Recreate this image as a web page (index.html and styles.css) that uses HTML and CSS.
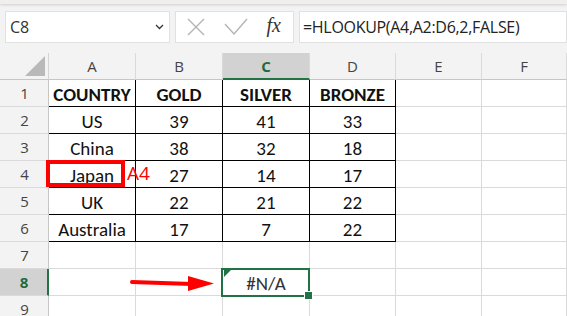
FILE: index.html
```html
<!DOCTYPE html>
<html lang="en">
<head>
    <meta charset="UTF-8">
    <title>Book1 - Excel</title>
    <link rel="stylesheet" href="styles.css">
</head>
<body>
    <div class="ribbon-edge"></div>

    <!-- name box + formula bar -->
    <div class="formula-row">
        <div class="name-box">
            <span>C8</span>
            <svg class="chevron" width="9" height="6" viewBox="0 0 9 6"><path d="M1 1 L4.5 4.5 L8 1" fill="none" stroke="#333" stroke-width="1.3"/></svg>
        </div>
        <div class="fx-buttons">
            <svg width="18" height="18" viewBox="0 0 18 18"><path d="M1 1 L17 17 M17 1 L1 17" stroke="#b4b4b4" stroke-width="1.4" fill="none"/></svg>
            <svg width="24" height="18" viewBox="0 0 24 18"><path d="M1 6 L10 16 L23 1" stroke="#b4b4b4" stroke-width="1.4" fill="none"/></svg>
            <span class="fx">fx</span>
        </div>
        <div class="formula-box">=HLOOKUP(A4,A2:D6,2,FALSE)</div>
    </div>

    <!-- worksheet grid -->
    <div class="sheet">
        <div class="corner">
            <svg width="20" height="20" viewBox="0 0 20 20"><polygon points="20,0 20,20 0,20" fill="#b9b9b9"/></svg>
        </div>
        <div class="col-head">A</div>
        <div class="col-head">B</div>
        <div class="col-head sel">C</div>
        <div class="col-head">D</div>
        <div class="col-head">E</div>
        <div class="col-head">F</div>

        <div class="row-head">1</div>
        <div class="cell bd hd">COUNTRY</div>
        <div class="cell bd hd">GOLD</div>
        <div class="cell bd hd">SILVER</div>
        <div class="cell bd hd">BRONZE</div>
        <div class="cell"></div>
        <div class="cell"></div>

        <div class="row-head">2</div>
        <div class="cell bd">US</div>
        <div class="cell bd">39</div>
        <div class="cell bd">41</div>
        <div class="cell bd">33</div>
        <div class="cell"></div>
        <div class="cell"></div>

        <div class="row-head">3</div>
        <div class="cell bd">China</div>
        <div class="cell bd">38</div>
        <div class="cell bd">32</div>
        <div class="cell bd">18</div>
        <div class="cell"></div>
        <div class="cell"></div>

        <div class="row-head">4</div>
        <div class="cell bd">Japan</div>
        <div class="cell bd">27</div>
        <div class="cell bd">14</div>
        <div class="cell bd">17</div>
        <div class="cell"></div>
        <div class="cell"></div>

        <div class="row-head">5</div>
        <div class="cell bd">UK</div>
        <div class="cell bd">22</div>
        <div class="cell bd">21</div>
        <div class="cell bd">22</div>
        <div class="cell"></div>
        <div class="cell"></div>

        <div class="row-head">6</div>
        <div class="cell bd">Australia</div>
        <div class="cell bd">17</div>
        <div class="cell bd">7</div>
        <div class="cell bd">22</div>
        <div class="cell"></div>
        <div class="cell"></div>

        <div class="row-head">7</div>
        <div class="cell"></div>
        <div class="cell"></div>
        <div class="cell"></div>
        <div class="cell"></div>
        <div class="cell"></div>
        <div class="cell"></div>

        <div class="row-head sel">8</div>
        <div class="cell"></div>
        <div class="cell"></div>
        <div class="cell active"><span class="err-flag"></span>#N/A<span class="fill-handle"></span></div>
        <div class="cell"></div>
        <div class="cell"></div>
        <div class="cell"></div>

        <div class="row-head">9</div>
        <div class="cell"></div>
        <div class="cell"></div>
        <div class="cell"></div>
        <div class="cell"></div>
        <div class="cell"></div>
        <div class="cell"></div>

        <!-- annotations drawn over the sheet -->
        <div class="mark-box"></div>
        <div class="mark-label">A4</div>
        <svg class="mark-arrow" width="90" height="20" viewBox="0 0 90 20">
            <path d="M2 6 L62 8" stroke="#f00" stroke-width="4" stroke-linecap="round" fill="none"/>
            <polygon points="58,0 84,7.5 58,15" fill="#f00"/>
        </svg>
    </div>
</body>
</html>
```

FILE: styles.css
```css
/* Base */
body {
    margin: 0;
    background-color: #f3f3f3;
    font-family: "Open Sans", "Noto Sans", sans-serif;
    color: #222;
    overflow: hidden;
}

.ribbon-edge {
    height: 4px;
    background-color: #f0efee;
    box-shadow: 0 1px 3px rgba(0, 0, 0, 0.15);
}

/* Formula bar */
.formula-row {
    display: flex;
    gap: 5px;
    padding: 7px 0 10px 5px;
    height: 32px;
}

.name-box, .fx-buttons, .formula-box {
    box-sizing: border-box;
    height: 32px;
    background-color: #fff;
    border: 1px solid #e1e1e1;
    display: flex;
    align-items: center;
}

.name-box {
    width: 165px;
    padding: 0 5px 0 4px;
    justify-content: space-between;
    font-size: 16px;
    color: #333;
}

.fx-buttons {
    width: 119px;
    padding: 0 12px 0 11px;
    justify-content: space-between;
}

.fx {
    font-family: "Liberation Serif", serif;
    font-style: italic;
    font-size: 20px;
    color: #333;
    margin-bottom: 3px;
}

.formula-box {
    flex: 1;
    padding-left: 3px;
    font-size: 16px;
    letter-spacing: -0.3px;
    color: #222;
    white-space: nowrap;
}

/* Worksheet */
.sheet {
    position: relative;
    display: grid;
    grid-template-columns: 49px 87px 87px 87px 86px 86px 85px;
    grid-template-rows: 27px;
    grid-auto-rows: 27px;
    background-color: #fff;
}

.corner, .col-head, .row-head {
    background-color: #f3f3f3;
    box-sizing: border-box;
    color: #444;
    font-size: 15px;
    display: flex;
    align-items: center;
    justify-content: center;
}

.corner {
    border-right: 1px solid #d4d4d4;
    border-bottom: 1px solid #c6c6c6;
    align-items: flex-end;
    justify-content: flex-end;
    padding: 0 3px 3px 0;
}

.col-head {
    border-right: 1px solid #dadada;
    border-bottom: 1px solid #c6c6c6;
}

.row-head {
    border-right: 1px solid #c6c6c6;
    border-bottom: 1px solid #dadada;
    padding-left: 1px;
}

.col-head.sel {
    background-color: #d2d2d2;
    color: #1d6b3e;
    font-weight: bold;
    border-bottom: 2px solid #217346;
}

.row-head.sel {
    background-color: #d2d2d2;
    color: #1d6b3e;
    font-weight: bold;
    border-right: 2px solid #217346;
}

.cell {
    box-sizing: border-box;
    border-right: 1px solid #dadada;
    border-bottom: 1px solid #dadada;
    display: flex;
    align-items: center;
    justify-content: center;
    padding-top: 2px;
    font-family: "Carlito", "Liberation Sans Narrow", "Lato", sans-serif;
    font-size: 19px;
    color: #111;
}

.cell.bd {
    border-right-color: #000;
    border-bottom-color: #000;
}

.cell.hd {
    font-weight: bold;
}

/* Selected cell */
.cell.active {
    position: relative;
    color: #333;
}

.cell.active::after {
    content: "";
    position: absolute;
    top: -1px;
    right: -1px;
    bottom: -2px;
    left: -2px;
    border: 2px solid #217346;
}

.err-flag {
    position: absolute;
    top: 1px;
    left: 1px;
    width: 0;
    height: 0;
    border-top: 7px solid #217346;
    border-right: 7px solid transparent;
}

.fill-handle {
    position: absolute;
    right: -4px;
    bottom: -5px;
    width: 7px;
    height: 7px;
    background-color: #217346;
    border: 1px solid #fff;
    z-index: 2;
}

/* Red annotations */
.mark-box {
    position: absolute;
    left: 46px;
    top: 107px;
    width: 79px;
    height: 27px;
    box-sizing: border-box;
    border: 4px solid #f00;
}

.mark-label {
    position: absolute;
    left: 127px;
    top: 107px;
    font-family: "Open Sans", sans-serif;
    font-size: 19px;
    color: #f00;
}

.mark-arrow {
    position: absolute;
    left: 130px;
    top: 223px;
}
```
